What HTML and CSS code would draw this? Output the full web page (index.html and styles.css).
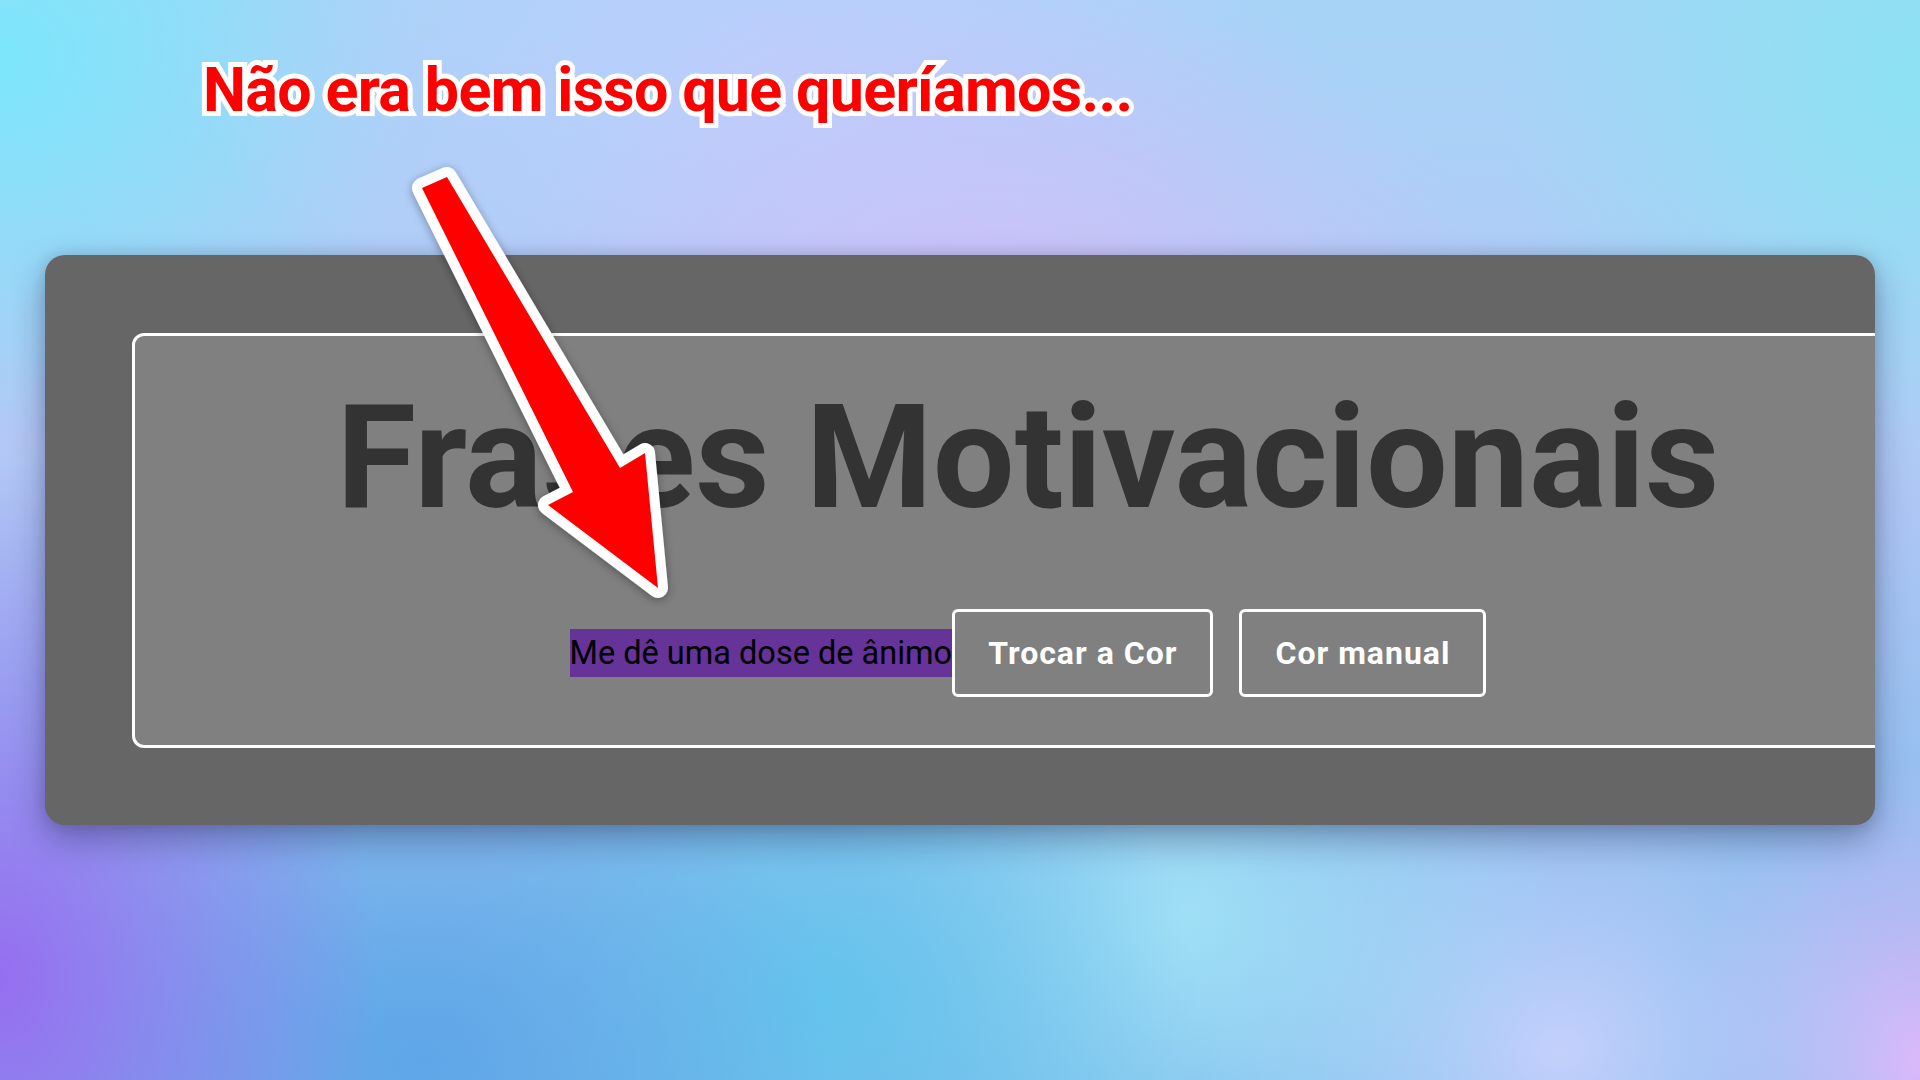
FILE: index.html
```html
<!DOCTYPE html>
<html lang="pt-BR">
<head>
<meta charset="utf-8">
<title>Frases Motivacionais</title>
<link rel="stylesheet" href="styles.css">
</head>
<body>
<div class="stage">
  <main class="card">
    <section class="box">
      <h1 class="title">Frases Motivacionais</h1>
      <div class="actions">
        <span class="cta">Me dê uma dose de ânimo</span>
        <button class="btn">Trocar a Cor</button>
        <button class="btn btn-second">Cor manual</button>
      </div>
    </section>
  </main>
  <p class="note">Não era bem isso que queríamos...</p>
  <svg class="arrow" width="300" height="470" viewBox="390 150 300 470" aria-hidden="true">
    <defs>
      <filter id="sh" x="-30%" y="-30%" width="160%" height="160%">
        <feDropShadow dx="0" dy="2" stdDeviation="5" flood-color="#000" flood-opacity="0.35"/>
      </filter>
    </defs>
    <polygon filter="url(#sh)" points="422,188 447,177 620,468 645,453 658,588 548,505 573,492" fill="#ff0000" stroke="#ffffff" stroke-width="20" stroke-linejoin="round" paint-order="stroke fill"/>
  </svg>
</div>
</body>
</html>
```
FILE: styles.css
```css
html, body {
  margin: 0;
  padding: 0;
}

body {
  width: 1920px;
  height: 1080px;
  overflow: hidden;
  font-family: Roboto, "Noto Sans", sans-serif;
  background-color: #9fd6f2;
  background-image:
    radial-gradient(ellipse 520px 420px at 1000px 380px, rgba(212, 190, 248, 0.95), rgba(212, 190, 248, 0) 100%),
    radial-gradient(ellipse 560px 360px at 760px 60px, rgba(188, 206, 253, 0.95), rgba(188, 206, 253, 0) 100%),
    radial-gradient(ellipse 420px 380px at 0px 60px, rgba(124, 230, 250, 1), rgba(124, 230, 250, 0) 100%),
    radial-gradient(ellipse 420px 420px at 1920px 80px, rgba(140, 226, 242, 1), rgba(140, 226, 242, 0) 100%),
    radial-gradient(ellipse 380px 520px at 0px 980px, rgba(150, 110, 240, 1), rgba(150, 110, 240, 0) 100%),
    radial-gradient(ellipse 420px 360px at 420px 1060px, rgba(94, 166, 232, 1), rgba(94, 166, 232, 0) 100%),
    radial-gradient(ellipse 380px 340px at 820px 1000px, rgba(100, 196, 236, 1), rgba(100, 196, 236, 0) 100%),
    radial-gradient(ellipse 380px 320px at 1180px 920px, rgba(160, 224, 246, 1), rgba(160, 224, 246, 0) 100%),
    radial-gradient(ellipse 360px 300px at 1560px 1050px, rgba(196, 208, 252, 1), rgba(196, 208, 252, 0) 100%),
    radial-gradient(ellipse 240px 300px at 1920px 1060px, rgba(220, 184, 250, 1), rgba(220, 184, 250, 0) 100%),
    linear-gradient(180deg, #a6d4f6 0%, #b4c8f6 40%, #7ab8ea 100%);
}

.stage {
  position: relative;
  width: 1920px;
  height: 1080px;
  padding: 255px 0 0 45px;
  box-sizing: border-box;
}

.card {
  width: 1830px;
  height: 570px;
  box-sizing: border-box;
  padding: 78px 0 0 87px;
  background: #666666;
  border-radius: 20px;
  overflow: hidden;
  box-shadow: 0 14px 34px rgba(20, 20, 60, 0.35), 0 0 14px rgba(0, 0, 0, 0.12);
}

.box {
  width: 1792px;
  box-sizing: border-box;
  padding: 49px 0 48px;
  background: #808080;
  border: 3px solid #ffffff;
  border-radius: 12px;
  text-align: center;
}

.title {
  margin: 0 0 80px;
  font-family: Roboto, sans-serif;
  font-weight: 700;
  font-size: 145px;
  line-height: 144px;
  color: #333333;
  white-space: nowrap;
}

.actions {
  display: flex;
  justify-content: center;
  align-items: center;
  height: 88px;
}

.cta {
  display: block;
  font-family: Roboto, sans-serif;
  font-size: 32.5px;
  line-height: 48px;
  color: #000000;
  background: #663399;
  white-space: nowrap;
}

.btn {
  height: 88px;
  padding: 0 33px;
  margin: 0;
  background: transparent;
  border: 3px solid #ffffff;
  border-radius: 6px;
  color: #ffffff;
  font-family: Roboto, sans-serif;
  font-weight: 700;
  font-size: 32px;
  letter-spacing: 1px;
  white-space: nowrap;
  cursor: pointer;
}

.btn-second {
  margin-left: 26px;
}

.note {
  position: absolute;
  left: 203px;
  top: 60px;
  margin: 0;
  font-family: Roboto, "Liberation Sans", sans-serif;
  font-weight: 700;
  font-size: 61px;
  line-height: 60px;
  letter-spacing: -0.7px;
  color: #ff0000;
  -webkit-text-stroke: 10px #ffffff;
  paint-order: stroke fill;
  white-space: nowrap;
}

.arrow {
  position: absolute;
  left: 390px;
  top: 150px;
  overflow: visible;
}
```
